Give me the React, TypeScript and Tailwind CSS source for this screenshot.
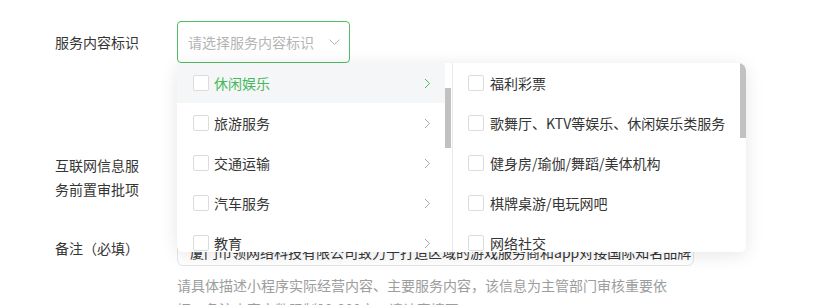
const green = "#45b85b"

const leftItems = ["休闲娱乐", "旅游服务", "交通运输", "汽车服务", "教育"]
const rightItems = [
  "福利彩票",
  "歌舞厅、KTV等娱乐、休闲娱乐类服务",
  "健身房/瑜伽/舞蹈/美体机构",
  "棋牌桌游/电玩网吧",
  "网络社交",
]

function Checkbox() {
  return <span className="w-4 h-4 shrink-0 rounded-[2px] border border-[#dcdcdc] bg-white" />
}

function Chevron({ active }: { active?: boolean }) {
  return (
    <svg width="7" height="11" viewBox="0 0 7 11" fill="none" className="shrink-0">
      <path d="M1 1l4.5 4.5L1 10" stroke={active ? green : "#a8a8a8"} strokeWidth="1" />
    </svg>
  )
}

function Dropdown() {
  return (
    <div className="absolute left-0 top-[42px] z-10 flex h-[189px] w-[569px] overflow-hidden rounded-b-[6px] rounded-tr-[8px] bg-white shadow-[0_3px_18px_rgba(0,0,0,0.10)]">
      {/* left column */}
      <div className="flex w-[276px] border-r border-[#e9e9e9]">
        <div className="w-[268px]">
          {leftItems.map((item, i) => (
            <div
              key={item}
              className={`flex h-10 items-center pl-4 pr-[14px] ${i === 0 ? "bg-[#f5f6f7]" : ""}`}
            >
              <Checkbox />
              <span className={`ml-[5px] flex-1 ${i === 0 ? "text-[#45b85b]" : "text-[#353535]"}`}>{item}</span>
              <Chevron active={i === 0} />
            </div>
          ))}
        </div>
        <div className="w-[6px] pt-[25px]">
          <div className="h-[60px] w-[6px] bg-[#c1c1c1]" />
        </div>
      </div>
      {/* right column */}
      <div className="flex flex-1">
        <div className="flex-1">
          {rightItems.map((item) => (
            <div key={item} className="flex h-10 items-center pl-[15px]">
              <Checkbox />
              <span className="ml-[6px] text-[#353535]">{item}</span>
            </div>
          ))}
        </div>
        <div className="w-[6px]">
          <div className="h-[75px] w-[6px] bg-[#c1c1c1]" />
        </div>
      </div>
    </div>
  )
}

export default function App() {
  return (
    <div
      className="h-[305px] w-[830px] overflow-hidden bg-white pl-[55px] pt-[21px] text-[14px] text-[#353535]"
      style={{ fontFamily: '"Noto Sans CJK SC", "Noto Sans", sans-serif' }}
    >
      {/* 服务内容标识 */}
      <div className="flex">
        <div className="flex h-[42px] w-[122px] items-center">服务内容标识</div>
        <div className="relative">
          <div className="flex h-[42px] w-[173px] items-center justify-between rounded-[4px] border border-[#4fbd63] pl-[10px] pr-[9px]">
            <span className="text-[#b4b4b4]">请选择服务内容标识</span>
            <svg width="11" height="6" viewBox="0 0 11 6" fill="none">
              <path d="M0.5 0.5l5 5 5-5" stroke="#b4b4b4" strokeWidth="1" />
            </svg>
          </div>
          <Dropdown />
        </div>
      </div>

      {/* 互联网信息服务前置审批项 */}
      <div className="mt-[90px] flex">
        <div className="w-[122px]">
          <div className="w-[86px] leading-6">互联网信息服务前置审批项</div>
        </div>
      </div>

      {/* 备注 */}
      <div className="mt-[27px] flex">
        <div className="w-[122px] pt-2 leading-6">备注（必填）</div>
        <div>
          <div className="h-[38px] w-[517px] overflow-hidden whitespace-nowrap rounded-[6px] border border-[#e5e5e5] pl-[12px] pt-[12px] leading-[22px]">
            厦门市领网络科技有限公司致力于打造区域的游戏服务商和app对接国际知名品牌
          </div>
          <div className="mt-[7px] w-[500px] leading-6 text-[#9d9d9d]">
            请具体描述小程序实际经营内容、主要服务内容，该信息为主管部门审核重要依据，备注内容字数限制20-200字，请认真填写。
          </div>
        </div>
      </div>
    </div>
  )
}
